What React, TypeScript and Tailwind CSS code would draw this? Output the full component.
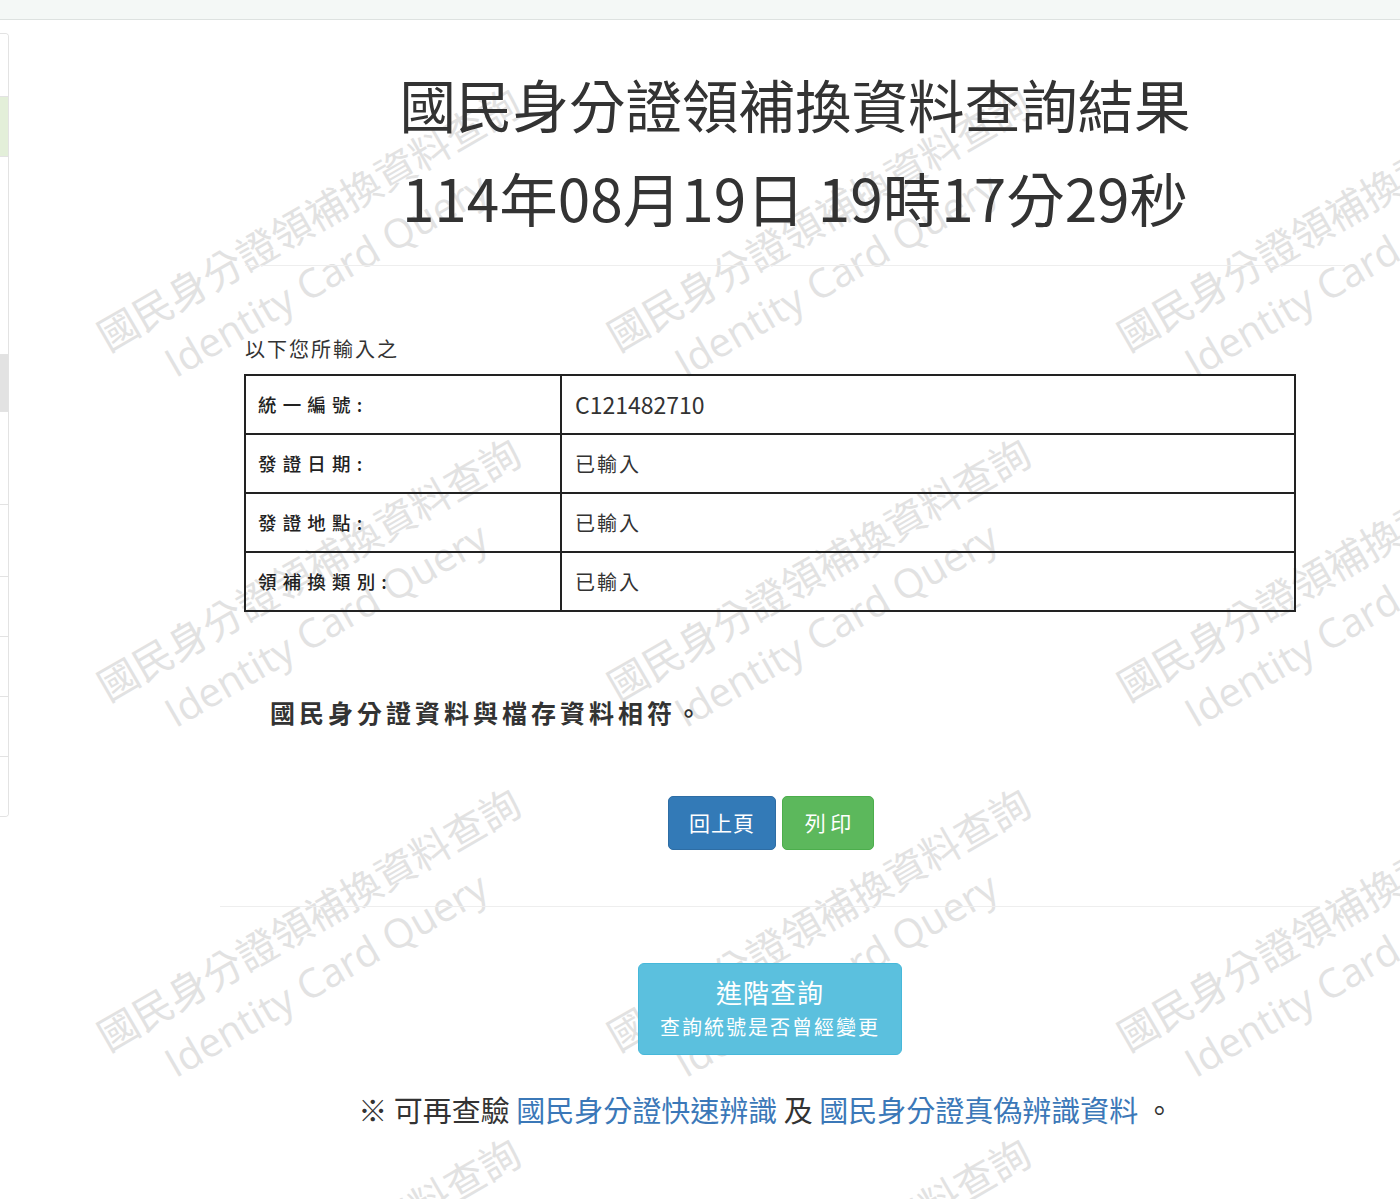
import React from 'react';

const font = { fontFamily: '"Noto Sans CJK TC", "Noto Sans", sans-serif' };

const rows = [
  { label: '統 一 編 號 :', value: 'C121482710', latin: true },
  { label: '發 證 日 期 :', value: '已輸入' },
  { label: '發 證 地 點 :', value: '已輸入' },
  { label: '領 補 換 類 別 :', value: '已輸入' },
];

// left nav strip, cut off at the window edge
const navBlocks = [
  { h: 62, cls: 'bg-white' },
  { h: 60, cls: 'bg-[#e3efd9]' },
  { h: 198, cls: 'bg-white' },
  { h: 57, cls: 'bg-[#e2e2e2]' },
  { h: 93, cls: 'bg-white' },
  { h: 72, cls: 'bg-white' },
  { h: 60, cls: 'bg-white' },
  { h: 60, cls: 'bg-white' },
  { h: 60, cls: 'bg-white' },
  { h: 60, cls: 'bg-white' },
];

const Watermark = () => {
  const tiles: { x: number; y: number }[] = [];
  for (let i = 0; i < 3; i++) {
    for (let j = 0; j < 4; j++) {
      tiles.push({ x: 88 + i * 510, y: 317 + j * 350 });
    }
  }
  return (
    <div className="absolute inset-0 overflow-hidden pointer-events-none select-none z-0">
      {tiles.map((t) => (
        <div
          key={`${t.x}-${t.y}`}
          className="absolute origin-top-left -rotate-30 whitespace-nowrap text-[#e2e2e2]"
          style={{ left: t.x, top: t.y }}
        >
          <div className="text-[40px] leading-[48px]" style={font}>國民身分證領補換資料查詢</div>
          <div
            className="text-[40px] leading-[48px] mt-[10px] ml-[45px]"
            style={{ fontFamily: '"Open Sans", sans-serif' }}
          >
            Identity Card Query
          </div>
        </div>
      ))}
    </div>
  );
};

export default function App() {
  return (
    <div className="relative w-[1400px] h-[1199px] overflow-hidden bg-white text-[#333]" style={font}>
      <Watermark />

      {/* top bar */}
      <div className="relative z-10 h-[20px] bg-[#f4f8f6] border-b border-[#dde2e0]"></div>

      <div className="relative z-10 flex items-start">
        {/* side nav */}
        <div className="w-[9px] shrink-0 mt-[13px] flex flex-col border-y border-r border-[#e3e3e3] rounded-r-[4px] overflow-hidden">
          {navBlocks.map((b, i) => (
            <div
              key={i}
              className={`${b.cls} ${i > 0 ? 'border-t border-[#e3e3e3]' : ''}`}
              style={{ height: b.h }}
            ></div>
          ))}
        </div>

        <div className="flex-1">
          {/* heading */}
          <div className="ml-[236px] w-[1100px] mt-[36px]">
            <h1 className="text-center leading-[94px] font-normal text-[#333]">
              <div className="text-[56.5px]">國民身分證領補換資料查詢結果</div>
              <div className="text-[58.5px]">114年08月19日 19時17分29秒</div>
            </h1>
            <div className="mt-[21px] h-px bg-[#eeeeee]"></div>
          </div>

          <div className="ml-[211px] w-[1100px]">
            <div className="ml-[25px] mt-[69px] text-[20px] leading-[28px] tracking-[2px]">以下您所輸入之</div>

            {/* input summary */}
            <div className="ml-[24px] mt-[11px] w-[1052px] border-2 border-[#222]">
              {rows.map((r, i) => (
                <div key={r.label} className={`flex h-[57px] ${i > 0 ? 'border-t-2 border-[#222] h-[59px]' : ''}`}>
                  <div className="w-[314px] flex items-center pl-[12px] text-[18.5px] font-medium tracking-[1px] text-[#222]">
                    {r.label}
                  </div>
                  <div
                    className={`flex-1 flex items-center pl-[13px] border-l-2 border-[#222] ${
                      r.latin ? 'text-[23px]' : 'text-[20px] tracking-[2px]'
                    }`}
                  >
                    {r.value}
                  </div>
                </div>
              ))}
            </div>

            <div className="ml-[50px] mt-[82px] text-[25px] leading-[36px] font-bold tracking-[4px] text-[#333]">
              國民身分證資料與檔存資料相符。
            </div>

            <div className="mt-[66px] flex justify-center gap-[6px] pl-[2px]">
              <button className="w-[108px] h-[54px] rounded-[5px] bg-[#337ab7] border border-[#2e6da4] text-white text-[21px] tracking-[1px]">
                回上頁
              </button>
              <button className="w-[92px] h-[54px] rounded-[5px] bg-[#5cb85c] border border-[#4cae4c] text-white text-[21px]">
                列 印
              </button>
            </div>

            <div className="mt-[56px] h-px bg-[#eeeeee]"></div>

            <div className="mt-[56px] flex justify-center">
              <button className="w-[264px] h-[92px] rounded-[6px] bg-[#5bc0de] border border-[#46b8da] text-white flex flex-col items-center justify-center">
                <span className="text-[26px] leading-[36px] tracking-[1px] -mt-[2px]">進階查詢</span>
                <span className="text-[20px] leading-[30px] tracking-[2px] mt-[2px]">查詢統號是否曾經變更</span>
              </button>
            </div>

            <div className="mt-[34px] text-center text-[29px] leading-[40px] pr-[8px]">
              ※ 可再查驗 <a className="text-[#3b78b8]">國民身分證快速辨識</a> 及{' '}
              <a className="text-[#3b78b8]">國民身分證真偽辨識資料</a> 。
            </div>
          </div>
        </div>
      </div>
    </div>
  );
}
